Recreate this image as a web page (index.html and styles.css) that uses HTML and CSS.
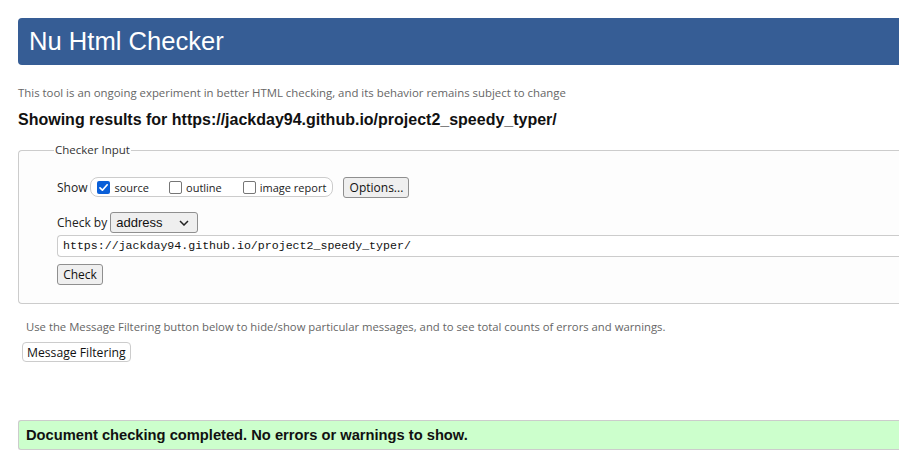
FILE: index.html
```html
<!DOCTYPE html>
<html lang="en">
<head>
<meta charset="utf-8">
<title>Nu Html Checker</title>
<link rel="stylesheet" href="styles.css">
</head>
<body>
<div class="page">
  <header class="banner"><h1 class="title">Nu Html Checker</h1></header>
  <p class="intro">This tool is an ongoing experiment in better HTML checking, and its behavior remains subject to change</p>
  <h2 class="results">Showing results for https://jackday94.github.io/project2_speedy_typer/</h2>
  <fieldset class="checker">
    <legend class="legend">Checker Input</legend>
    <div class="row show-row">
      <span class="label">Show</span>
      <span class="pill">
        <span class="opt"><span class="box checked"><svg viewBox="0 0 13 13" width="13" height="13"><path d="M3 6.8 L5.4 9.2 L10.2 3.8" fill="none" stroke="#fff" stroke-width="1.7" stroke-linecap="round" stroke-linejoin="round"/></svg></span>source</span>
        <span class="opt"><span class="box"></span>outline</span>
        <span class="opt"><span class="box"></span>image report</span>
      </span>
      <button class="btn options">Options...</button>
    </div>
    <div class="row checkby-row">
      <span class="label">Check by</span>
      <span class="select">address<svg class="chev" viewBox="0 0 10 6" width="10" height="6"><path d="M1 1 L5 5 L9 1" fill="none" stroke="#222" stroke-width="1.5"/></svg></span>
    </div>
    <div class="url">https://jackday94.github.io/project2_speedy_typer/</div>
    <button class="btn check">Check</button>
  </fieldset>
  <p class="filter-note">Use the Message Filtering button below to hide/show particular messages, and to see total counts of errors and warnings.</p>
  <button class="btn filter">Message Filtering</button>
  <div class="success">Document checking completed. No errors or warnings to show.</div>
</div>
</body>
</html>
```
FILE: styles.css
```css
html, body {
  margin: 0;
  padding: 0;
  overflow: hidden;
  background: #fff;
}
body {
  font-family: "Open Sans", "Noto Sans", sans-serif;
  color: #222;
}
.page {
  padding: 18px 0 0 18px;
  width: 960px;
}
.banner {
  background: #365d95;
  border-radius: 4px 0 0 4px;
  height: 47px;
  display: flex;
  align-items: center;
  padding-left: 11px;
}
.title {
  margin: 0;
  font-family: "Liberation Sans", Arial, sans-serif;
  font-weight: normal;
  font-size: 25.6px;
  color: #fff;
  line-height: 1;
}
.intro {
  margin: 20px 0 0 0;
  font-size: 11.4px;
  color: #666;
  line-height: 16px;
}
.results {
  margin: 10px 0 0 0;
  font-family: "Liberation Sans", Arial, sans-serif;
  font-size: 16px;
  font-weight: bold;
  color: #111;
  line-height: 18px;
}
.checker {
  margin: 14px 0 0 0;
  border: 1px solid #ccc;
  border-radius: 4px 0 0 4px;
  border-right: none;
  background: #fdfdfd;
  padding: 10px 0 18px 38px;
  min-inline-size: 0;
}
.legend {
  font-size: 11.5px;
  color: #333;
  padding: 0 1px;
  margin-left: -3px;
  line-height: 14px;
}
.row {
  display: flex;
  align-items: center;
  font-size: 12px;
  color: #222;
}
.show-row {
  height: 20px;
  margin-top: 10px;
}
.label {
  margin-right: 3px;
}
.pill {
  display: flex;
  align-items: center;
  height: 18px;
  border: 1px solid #ccc;
  border-radius: 8px;
  padding: 0 6px 0 6px;
  width: 229px;
  background: #fff;
  font-size: 11px;
}
.opt {
  display: flex;
  align-items: center;
  margin-right: 20px;
}
.opt:nth-child(2) { margin-right: 21px; }
.opt:last-child { margin-right: 0; }
.box {
  width: 11px;
  height: 11px;
  border: 1px solid #767676;
  border-radius: 2px;
  margin-right: 4px;
  background: #fff;
  display: inline-flex;
}
.box.checked {
  width: 13px;
  height: 13px;
  border: none;
  background: #0a5fd8;
}
.btn {
  font-family: "Open Sans", "Noto Sans", sans-serif;
  background: #efefef;
  border: 1px solid #8f8f8f;
  border-radius: 3px;
  color: #111;
  padding: 0 5px;
  margin: 0;
}
.options {
  margin-left: 10px;
  height: 21px;
  font-size: 12px;
  width: 66px;
}
.checkby-row {
  margin-top: 15px;
  height: 21px;
}
.select {
  display: flex;
  align-items: center;
  justify-content: space-between;
  box-sizing: border-box;
  width: 88px;
  height: 21px;
  background: #efefef;
  border: 1px solid #8f8f8f;
  border-radius: 3px;
  padding: 0 8px 0 5px;
  font-family: "Liberation Sans", Arial, sans-serif;
  font-size: 13px;
  color: #111;
}
.url {
  margin-top: 2px;
  height: 20px;
  border: 1px solid #ccc;
  border-right: none;
  border-radius: 4px 0 0 4px;
  background: #fff;
  font-family: "Liberation Mono", monospace;
  font-size: 11.6px;
  line-height: 20px;
  padding-left: 5px;
  color: #111;
}
.check {
  display: block;
  margin-top: 7px;
  height: 21px;
  font-size: 12px;
  width: 46px;
}
.filter-note {
  margin: 15px 0 0 8px;
  font-size: 11.3px;
  color: #666;
  line-height: 15px;
}
.filter {
  display: block;
  margin: 8px 0 0 4px;
  height: 20px;
  font-size: 12.2px;
  background: #fff;
  border: 1px solid #ccc;
  border-radius: 4px;
  padding: 0 4px;
}
.success {
  margin-top: 58px;
  background: #ccffcc;
  border: 1px solid #ccc;
  border-right: none;
  border-radius: 3px 0 0 3px;
  height: 28px;
  line-height: 28px;
  padding-left: 7px;
  font-family: "Liberation Sans", Arial, sans-serif;
  font-size: 14.7px;
  font-weight: bold;
  color: #111;
}
```
